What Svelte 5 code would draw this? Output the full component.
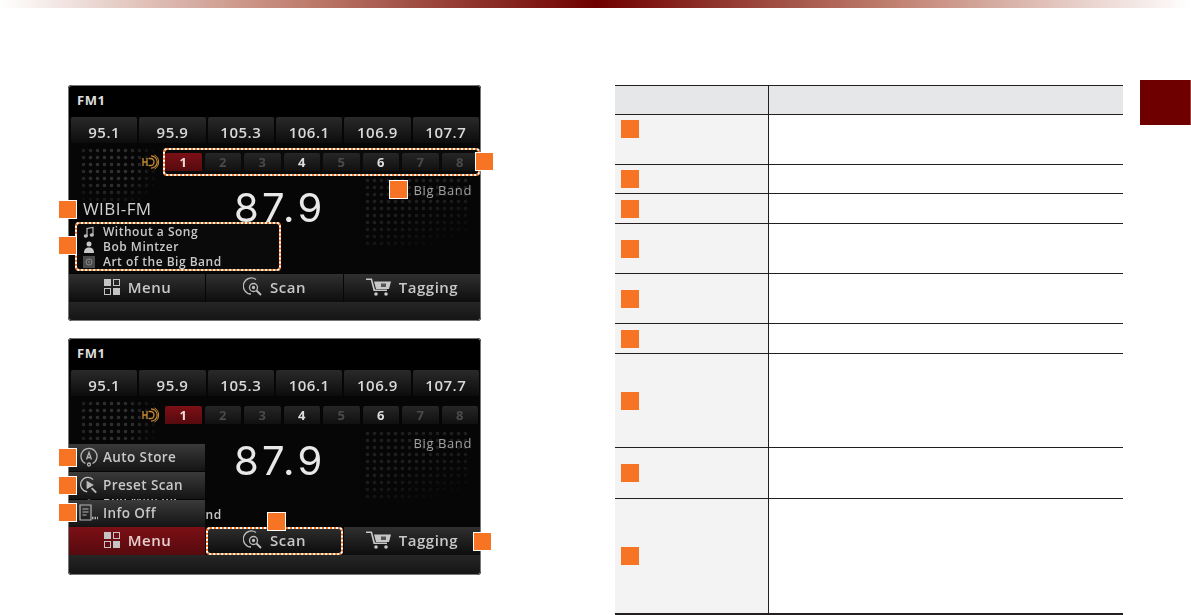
<script lang="ts">
  const presets = ['95.1', '95.9', '105.3', '106.1', '106.9', '107.7']
  const channels = [
    { n: 1, state: 'active' },
    { n: 2, state: 'off' },
    { n: 3, state: 'off' },
    { n: 4, state: 'on' },
    { n: 5, state: 'off' },
    { n: 6, state: 'on' },
    { n: 7, state: 'off' },
    { n: 8, state: 'off' }
  ]

  // row heights of the legend table, header not included
  const rows = [
    { h: 50, top: true },
    { h: 29 },
    { h: 30 },
    { h: 50 },
    { h: 50 },
    { h: 30 },
    { h: 94 },
    { h: 51 },
    { h: 115 }
  ]

  const firstMarks = [
    { x: 407, y: 67 },
    { x: 321, y: 95 },
    { x: -10, y: 115 },
    { x: -10, y: 151 }
  ]
  const secondMarks = [
    { x: -10, y: 110 },
    { x: -10, y: 138 },
    { x: -10, y: 165 },
    { x: 199, y: 174 },
    { x: 405, y: 194 }
  ]
</script>

{#snippet hdIcon()}
  <svg class="hd" viewBox="0 0 18 16" width="18" height="16" fill="none" stroke="#c98a32" stroke-width="1.300">
    <path d="M1 4v8M5 4v8M1 8h4" />
    <path d="M6.500 4.500h2a3.500 3.500 0 0 1 0 7h-2" />
    <path d="M9 1.800a6.200 6.200 0 0 1 0 12.400" />
    <path d="M12.500 1a8 8 0 0 1 0 14" stroke-width="1" />
  </svg>
{/snippet}

{#snippet noteIcon()}
  <svg viewBox="0 0 12 12" width="12" height="12" fill="none" stroke="#bbb" stroke-width="1.200">
    <path d="M4 10V2.500L10 1.500V8.500" />
    <ellipse cx="2.800" cy="10" rx="1.500" ry="1.200" fill="#bbb" />
    <ellipse cx="8.800" cy="9" rx="1.500" ry="1.200" fill="#bbb" />
  </svg>
{/snippet}

{#snippet personIcon()}
  <svg viewBox="0 0 12 12" width="12" height="12" fill="#c8c8c8">
    <circle cx="6" cy="3" r="2.500" />
    <path d="M1 12C1 8 3 6.500 6 6.500S11 8 11 12z" />
  </svg>
{/snippet}

{#snippet albumIcon()}
  <svg viewBox="0 0 12 12" width="12" height="12">
    <rect width="12" height="12" fill="#4a4a4a" />
    <circle cx="6" cy="6" r="3" fill="none" stroke="#888" />
    <circle cx="6" cy="6" r="0.800" fill="#999" />
  </svg>
{/snippet}

{#snippet menuIcon()}
  <svg viewBox="0 0 18 16" width="18" height="16" fill="#c4c4c4">
    <rect x="1" y="0" width="7" height="7" />
    <rect x="10.500" y="0.500" width="6" height="6" fill="none" stroke="#c4c4c4" />
    <rect x="1.500" y="9.500" width="6" height="6" fill="none" stroke="#c4c4c4" />
    <rect x="10" y="9" width="7" height="7" />
  </svg>
{/snippet}

{#snippet scanIcon()}
  <svg viewBox="0 0 20 20" width="20" height="20" fill="none" stroke="#bcbcbc" stroke-width="1.300">
    <path d="M13 2.500A8 8 0 1 0 8 17" />
    <circle cx="10.500" cy="10.500" r="4" />
    <circle cx="10.500" cy="10.500" r="1" fill="#bcbcbc" />
    <path d="M13.500 13.500L18 18" stroke-width="2" />
  </svg>
{/snippet}

{#snippet presetIcon()}
  <svg viewBox="0 0 20 20" width="18" height="18" fill="none" stroke="#bcbcbc" stroke-width="1.400">
    <path d="M14.500 4A8 8 0 1 0 8 17.500" />
    <path d="M8 6.500l6 3.500-6 3.500z" fill="#bcbcbc" />
    <path d="M13 13.500L18 18.500" stroke-width="2.200" />
  </svg>
{/snippet}

{#snippet cartIcon()}
  <svg viewBox="0 0 26 18" width="26" height="18" fill="#c8c8c8">
    <path d="M0 0.500h6l3 11h12v1.500H7.500L4.800 2H0z" />
    <path d="M8 3.500h17l-2 7.500H10z" />
    <rect x="15" y="5.500" width="5" height="3.500" fill="#555" />
    <circle cx="10" cy="16" r="1.800" />
    <circle cx="20" cy="16" r="1.800" />
  </svg>
{/snippet}

{#snippet autoIcon()}
  <svg viewBox="0 0 18 20" width="18" height="20" fill="none" stroke="#b4b4b4" stroke-width="1.300">
    <path d="M5.500 16.500A8 8 0 1 1 12.500 16.500" />
    <path d="M6.500 12.500L9 5.500l2.500 7M7.500 10.500h3" />
    <circle cx="9" cy="17.500" r="1.500" />
  </svg>
{/snippet}

{#snippet infoIcon()}
  <svg viewBox="0 0 20 18" width="20" height="18" fill="none" stroke="#b4b4b4" stroke-width="1.200">
    <path d="M1 1h11v15H1zM3.500 5h6M3.500 8h6M3.500 11h4" />
    <path d="M13 14h6" stroke-width="2.500" stroke-dasharray="1.500 1" />
  </svg>
{/snippet}

{#snippet channelRow()}
  {#each channels as ch}
    <span class="channel {ch.state}">{ch.n}</span>
  {/each}
{/snippet}

{#snippet infoRows()}
  <div class="track">{@render noteIcon()}<span>Without a Song</span></div>
  <div class="track">{@render personIcon()}<span>Bob Mintzer</span></div>
  <div class="track">{@render albumIcon()}<span>Art of the Big Band</span></div>
{/snippet}

{#snippet radio(second: boolean)}
  <div class="radio">
    <div class="screen">
      <div class="dots left-dots"></div>
      <div class="dots right-dots"></div>

      <div class="title">FM1</div>

      <div class="presets">
        {#each presets as p}
          <span class="preset">{p}</span>
        {/each}
      </div>

      <div class="hd-row">
        {@render hdIcon()}
        <div class="channels" class:picked={!second}>
          {@render channelRow()}
        </div>
      </div>

      <div class="middle">
        <div class="station">
          <div class="name" class:hidden={second}>WIBI-FM</div>
          <div class="tracks" class:picked={!second}>
            {@render infoRows()}
          </div>
        </div>
        <div class="freq">87.9</div>
        <div class="genre">Big Band</div>
      </div>

      <div class="actions">
        <div class="action" class:red={second}>{@render menuIcon()}<span>Menu</span></div>
        <div class="action" class:picked={second}>{@render scanIcon()}<span>Scan</span></div>
        <div class="action">{@render cartIcon()}<span>Tagging</span></div>
      </div>

      <div class="footer"></div>

      {#if second}
        <div class="popup">
          <div class="pop-item"><span class="pop-icon">{@render autoIcon()}</span><span>Auto Store</span></div>
          <div class="pop-item"><span class="pop-icon">{@render presetIcon()}</span><span>Preset Scan</span></div>
          <div class="pop-item"><span class="pop-icon">{@render infoIcon()}</span><span>Info Off</span></div>
        </div>
      {/if}
    </div>

    {#each second ? secondMarks : firstMarks as m}
      <span class="mark ringed" style="left: {m.x}px; top: {m.y}px"></span>
    {/each}
  </div>
{/snippet}

<div class="page">
  <div class="topbar"></div>

  <div class="content">
    <div class="shots">
      {@render radio(false)}
      {@render radio(true)}
    </div>

    <div class="legend">
      <div class="row head">
        <div class="key"></div>
        <div class="desc"></div>
      </div>
      {#each rows as r}
        <div class="row" style="height: {r.h}px">
          <div class="key" class:top={r.top}><span class="mark"></span></div>
          <div class="desc"></div>
        </div>
      {/each}
    </div>

    <div class="tab"></div>
  </div>
</div>

<style>
  :global(body) {
    background: #fff;
    overflow: hidden;
  }

  .page {
    width: 1191px;
    height: 615px;
    overflow: hidden;
    font-family: 'Open Sans', 'Liberation Sans', sans-serif;
  }

  .topbar {
    height: 8px;
    background: linear-gradient(90deg, #fff 0%, #c08070 25%, #6f0000 50%, #c08070 75%, #fff 100%);
  }

  .content {
    display: flex;
    align-items: flex-start;
    padding: 72px 0 0 68px;
  }

  .shots {
    width: 413px;
    margin-top: 5px;
    display: flex;
    flex-direction: column;
    gap: 17px;
  }

  .radio {
    position: relative;
    height: 236px;
  }

  .radio + .radio {
    height: 237px;
  }

  .screen {
    position: relative;
    height: 100%;
    box-sizing: border-box;
    display: flex;
    flex-direction: column;
    overflow: hidden;
    border-radius: 4px;
    background: #060606;
    color: #ddd;
    filter: blur(0.5px);
  }

  .screen::after {
    content: '';
    position: absolute;
    inset: 0;
    border-radius: 4px;
    box-shadow: inset 0 0 0 1px #777;
    pointer-events: none;
  }

  .dots {
    position: absolute;
    background-image: radial-gradient(circle, #2e2e2e 1.4px, transparent 2.2px);
    background-size: 7px 7px;
  }

  .left-dots {
    left: 12px;
    top: 62px;
    width: 76px;
    height: 58px;
    -webkit-mask-image: radial-gradient(ellipse at 40% 35%, #000 35%, transparent 80%);
    mask-image: radial-gradient(ellipse at 40% 35%, #000 35%, transparent 80%);
  }

  .right-dots {
    right: 12px;
    top: 92px;
    width: 105px;
    height: 72px;
    background-image: radial-gradient(circle, #1e1e1e 1.4px, transparent 2.2px);
    -webkit-mask-image: linear-gradient(160deg, #000 45%, transparent 90%);
    mask-image: linear-gradient(160deg, #000 45%, transparent 90%);
  }

  .title {
    height: 32px;
    padding: 0 9px;
    line-height: 30px;
    font-size: 13px;
    font-weight: 700;
    letter-spacing: 0.500px;
    color: #ddd;
    background: #000;
  }

  .presets {
    position: relative;
    display: grid;
    grid-template-columns: repeat(6, 1fr);
    gap: 2px;
    height: 26px;
    padding: 0 2px 0 3px;
  }

  .preset {
    display: flex;
    align-items: center;
    justify-content: center;
    padding-top: 4px;
    box-sizing: border-box;
    border-radius: 2px 2px 0 0;
    background: linear-gradient(#2a2a2a, #0c0c0c);
    font-size: 15px;
    font-weight: 600;
    letter-spacing: 0.500px;
    color: #d8d8d8;
  }

  .hd-row {
    position: relative;
    display: flex;
    align-items: flex-end;
    gap: 3px;
    height: 33px;
    padding-left: 74px;
  }

  .hd-row :global(svg) {
    margin-bottom: 6px;
  }

  .channels {
    display: grid;
    grid-template-columns: repeat(8, 1fr);
    gap: 3px;
    flex: 1;
    height: 28px;
    box-sizing: border-box;
    margin-right: 1px;
    padding: 3px 0;
    border: 2px solid transparent;
  }

  .channel {
    display: flex;
    align-items: center;
    justify-content: center;
    background: linear-gradient(#262626, #101010);
    font-size: 13px;
    font-weight: 700;
    border-radius: 2px 2px 0 0;
  }

  .channel.active {
    background: linear-gradient(#7c1016, #560a0e);
    color: #f0d8d8;
  }

  .channel.off {
    color: #4a4a4a;
  }

  .channel.on {
    color: #ddd;
  }

  .middle {
    position: relative;
    display: grid;
    grid-template-columns: 167px 88px 1fr;
    height: 98px;
  }

  .station {
    grid-column: 1;
    grid-row: 1;
    display: flex;
    flex-direction: column;
    justify-content: flex-end;
    padding-left: 7px;
    width: 213px;
    height: 95px;
    box-sizing: border-box;
  }

  .name {
    padding-left: 8px;
    margin-bottom: 3px;
    font-size: 17px;
    letter-spacing: 0.400px;
    line-height: 20px;
    color: #d0d0d0;
  }

  .name.hidden {
    visibility: hidden;
  }

  .tracks {
    height: 49px;
    box-sizing: border-box;
    padding: 1px 6px;
    border: 2px solid transparent;
    display: flex;
    flex-direction: column;
    justify-content: center;
  }

  .track {
    display: flex;
    align-items: center;
    gap: 8px;
    height: 15px;
    font-size: 12px;
    font-weight: 600;
    letter-spacing: 0.500px;
    color: #c8c8c8;
    white-space: nowrap;
  }

  .freq {
    grid-column: 2;
    grid-row: 1;
    margin: 12px 0 0 -1px;
    font-family: Inter, 'Open Sans', sans-serif;
    font-size: 40px;
    line-height: 40px;
    letter-spacing: 3.300px;
    color: #e8e8e8;
    white-space: nowrap;
  }

  .genre {
    grid-column: 3;
    grid-row: 1;
    justify-self: end;
    margin: 5px 9px 0 0;
    font-size: 13px;
    letter-spacing: 0.600px;
    line-height: 18px;
    color: #a0a0a0;
  }

  .actions {
    position: relative;
    display: grid;
    grid-template-columns: 136px 137px 136px;
    gap: 1px;
    height: 28px;
    padding: 0 1px;
  }

  .action {
    display: flex;
    align-items: center;
    justify-content: center;
    gap: 7px;
    padding-bottom: 3px;
    background: linear-gradient(#303030, #0d0d0d);
    font-size: 15px;
    font-weight: 600;
    letter-spacing: 0.500px;
    color: #c8c8c8;
    box-sizing: border-box;
  }

  .action.red {
    background: linear-gradient(#7c1016, #560a0e);
    color: #e8d0d0;
  }

  .footer {
    flex: 1;
    background: linear-gradient(#262626, #141414);
  }

  .popup {
    position: absolute;
    left: 1px;
    top: 106px;
    width: 136px;
    display: flex;
    flex-direction: column;
    gap: 1px;
  }

  .pop-item {
    display: flex;
    align-items: center;
    gap: 4px;
    height: 27px;
    padding: 0 0 2px 9px;
    box-sizing: border-box;
    background: linear-gradient(#3a3a3a, #141414);
    font-size: 13.500px;
    font-weight: 600;
    letter-spacing: 0.400px;
    color: #c8c8c8;
  }

  .pop-icon {
    display: flex;
    justify-content: center;
    width: 21px;
  }

  .picked {
    border: 2px dotted #f47421;
    border-radius: 4px;
    background: linear-gradient(#0a0a0a, #0a0a0a) padding-box, linear-gradient(#fff, #fff) border-box;
  }

  .action.picked {
    background: linear-gradient(#2c2c2c, #0d0d0d) padding-box, linear-gradient(#fff, #fff) border-box;
  }

  .mark {
    display: block;
    width: 18px;
    height: 18px;
    background: #f67423;
  }

  .mark.ringed {
    position: absolute;
    box-sizing: content-box;
    width: 17px;
    height: 17px;
    border: 1px solid #fff;
  }

  .legend {
    width: 508px;
    margin-left: 134px;
    margin-top: 5px;
    border-bottom: 2px solid #231f20;
  }

  .row {
    display: grid;
    grid-template-columns: 154px 1fr;
    box-sizing: border-box;
    border-top: 1px solid #231f20;
  }

  .row.head {
    height: 29px;
  }

  .key {
    display: flex;
    align-items: center;
    padding-left: 6px;
    background: #f3f3f3;
    border-right: 1px solid #231f20;
    box-sizing: border-box;
  }

  .key.top {
    align-items: flex-start;
    padding-top: 5px;
  }

  .head .key,
  .head .desc {
    background: #e6e7e9;
  }

  .tab {
    width: 50px;
    height: 45px;
    margin-left: 17px;
    background: #6f0000;
    border-right: 1px solid #a04040;
  }
</style>
